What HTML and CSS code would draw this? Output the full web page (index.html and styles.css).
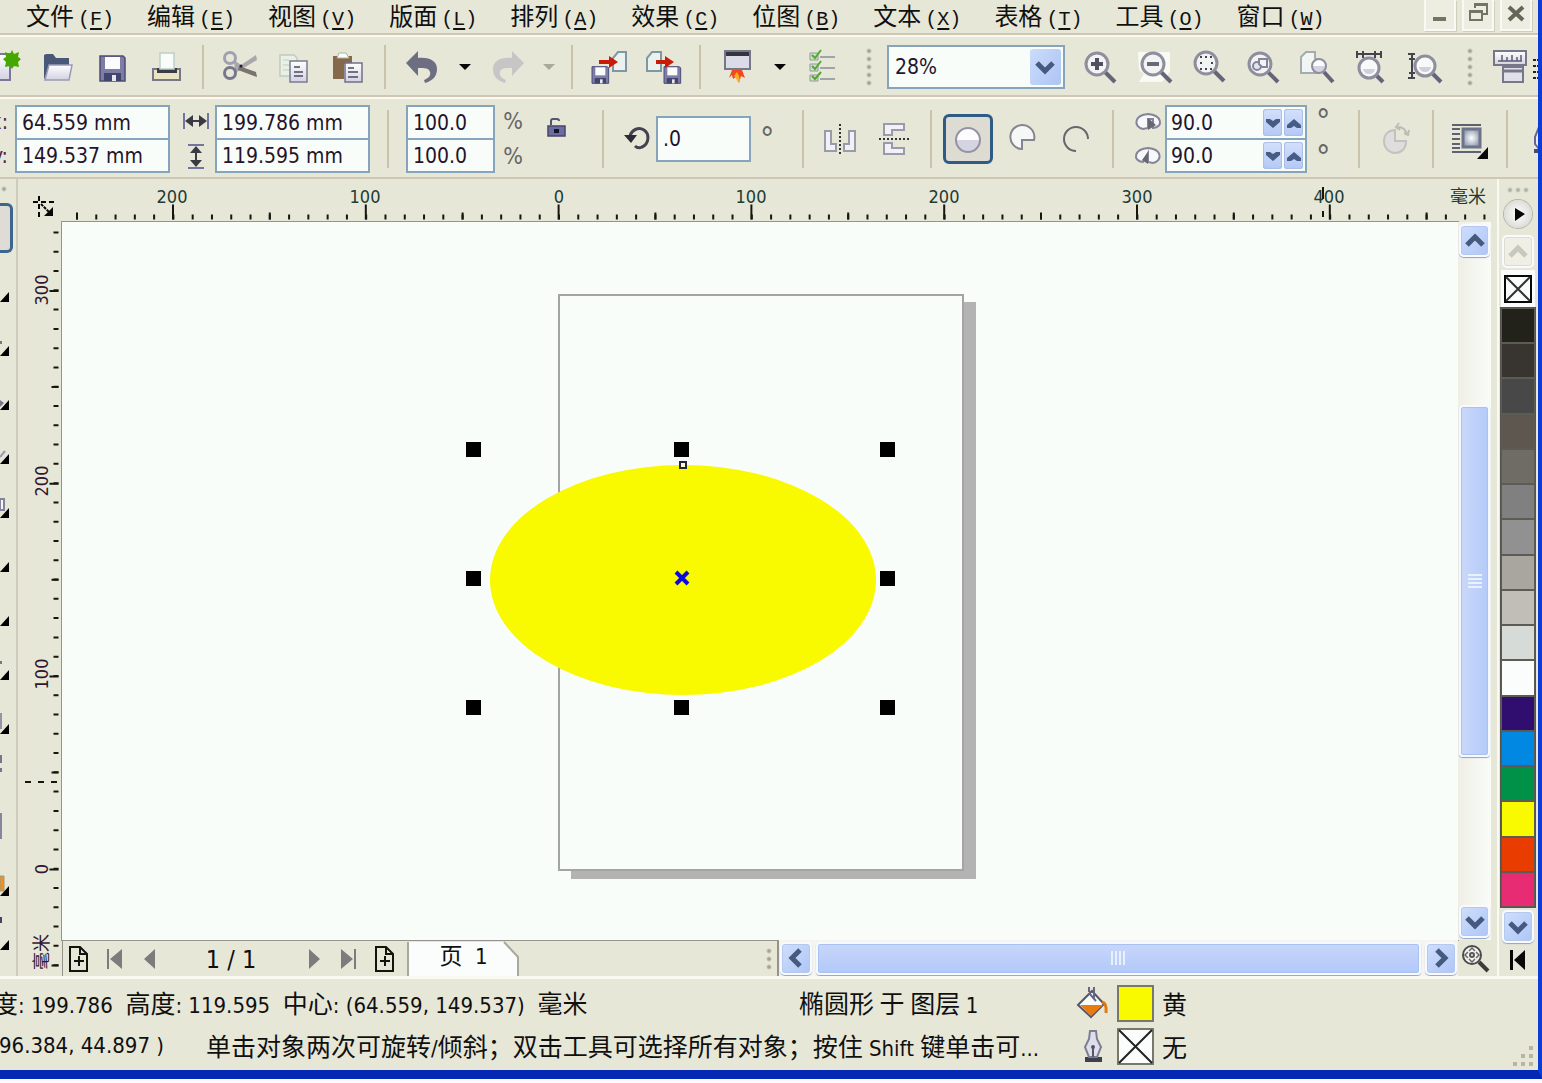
FILE: index.html
```html
<!DOCTYPE html>
<html lang="zh-CN">
<head>
<meta charset="utf-8">
<title>绘图窗口</title>
<link rel="stylesheet" href="styles.css">
</head>
<body>
<svg class="defs" aria-hidden="true">
  <defs>
    <linearGradient id="glass" x1="0" y1="0" x2="0" y2="1"><stop offset="0.5" stop-color="#fbfcfb"/><stop offset="0.5" stop-color="#d4d4e2"/></linearGradient>
    <linearGradient id="sheet" x1="0" y1="0" x2="0" y2="1"><stop offset="0" stop-color="#fff"/><stop offset="1" stop-color="#d2d2e2"/></linearGradient>
    <radialGradient id="glow"><stop offset="0" stop-color="#fff"/><stop offset="1" stop-color="#98a2b6"/></radialGradient>
    <symbol id="lens" viewBox="0 0 36 36" overflow="visible"><path d="M22 22l11 11" stroke="#666478" stroke-width="4"/><circle cx="15" cy="15" r="11" fill="#f2f4f4" stroke="#8f8e9e" stroke-width="3"/></symbol>
    <symbol id="disk" viewBox="0 0 36 36"><path d="M6 7h23l2 2v23H6z" fill="#7d7da6" stroke="#4c4c78" stroke-width="1.5"/><path d="M11 8h15v12H11z" fill="#fafcfc"/><path d="M10 24h17v8H10z" fill="#43466c"/><path d="M18 26h4v6h-4z" fill="#e6e6ee"/></symbol>
    <symbol id="bend" viewBox="0 0 36 36"><path d="M2 14L14 2v7c13-1 19 4 19 11 0 8-5 12-12 14l-1-3c5-2 7-5 6-8-1-4-5-4-12-4v8z" fill="currentColor"/></symbol>
    <symbol id="down" viewBox="0 0 24 24"><path d="M4 8l8 8 8-8" fill="none" stroke="currentColor" stroke-width="5"/></symbol>
    <symbol id="pageadd" viewBox="0 0 24 30"><path d="M3 3h10l7 7v17H3zM13 3v7h7M7 17h10M12 12v10" fill="none" stroke="#14140f" stroke-width="2"/></symbol>
  </defs>
</svg>
<div class="window">
  <header class="menubar">
    <nav class="menus">
      <button>文件<kbd>(<u>F</u>)</kbd></button><button>编辑<kbd>(<u>E</u>)</kbd></button><button>视图<kbd>(<u>V</u>)</kbd></button><button>版面<kbd>(<u>L</u>)</kbd></button><button>排列<kbd>(<u>A</u>)</kbd></button><button>效果<kbd>(<u>C</u>)</kbd></button><button>位图<kbd>(<u>B</u>)</kbd></button><button>文本<kbd>(<u>X</u>)</kbd></button><button>表格<kbd>(<u>T</u>)</kbd></button><button>工具<kbd>(<u>O</u>)</kbd></button><button>窗口<kbd>(<u>W</u>)</kbd></button>
    </nav>
    <div class="winctl">
      <button aria-label="最小化"><svg width="24" height="24"><path d="M5 16h13v4H5z" fill="#747466"/></svg></button>
      <button aria-label="还原"><svg width="24" height="24"><path d="M9 7V3h12v10h-4M4 10h12v9H4z" fill="none" stroke="#747466" stroke-width="2"/><path d="M8 2h14v3H8zM3 9h14v3H3z" fill="#747466"/></svg></button>
      <button aria-label="关闭"><svg width="24" height="24"><path d="M5 6l14 13M19 6L5 19" stroke="#66665a" stroke-width="4"/></svg></button>
    </div>
  </header>

  <div class="toolbar" role="toolbar">
    <button class="tool first" aria-label="新建"><svg class="i"><path d="M2 5h22v26H2z" fill="url(#sheet)" stroke="#7a7898" stroke-width="2"/><path d="M26 1l2 4 5-2-1 5 3 2-3 3 1 5-5-1-2 3-2-3-5 1 1-5-3-3 3-2-1-5 5 2z" fill="#45a800"/></svg></button>
    <button class="tool" aria-label="打开"><svg class="i"><path d="M4 31V6l2-1h7l3 4h13v8H9z" fill="#4a5878"/><path d="M9 16h23l-3 15H5z" fill="url(#sheet)" stroke="#9a9cb4" stroke-width="1.5"/></svg></button>
    <button class="tool" aria-label="保存"><svg class="i"><use href="#disk"/></svg></button>
    <button class="tool" aria-label="打印"><svg class="i"><path d="M5 20h27v11H5z" fill="#e8e4c4" stroke="#77778a" stroke-width="2"/><path d="M9 19h20v5H9z" fill="#3c3c46"/><path d="M12 4h14v16H12z" fill="#f8fcfa" stroke="#bdd0c6" stroke-width="1.5"/></svg></button>
    <i class="sep"></i>
    <button class="tool" aria-label="剪切"><svg class="i"><path d="M12 11l7 5L34 6l1 5-15 9-7 4" fill="#a8a8ac"/><path d="M17 17l17 6 1 5-19-7z" fill="#78746e"/><circle cx="8" cy="9" r="5.500" fill="none" stroke="#a0a0b0" stroke-width="3"/><circle cx="8" cy="24" r="5.500" fill="none" stroke="#77778a" stroke-width="3"/><circle cx="19" cy="17" r="1.500" fill="#222"/></svg></button>
    <button class="tool" aria-label="复制"><svg class="i"><path d="M4 6h14l3 3v18H4z" fill="#eaf0e6" stroke="#bccdbf" stroke-width="1.500"/><path d="M7 11h6M7 16h6M7 21h6" stroke="#bccdbf"/><path d="M14 12h17v21H14z" fill="url(#sheet)" stroke="#7a7c90" stroke-width="1.500"/><path d="M18 18h6M18 23h9M18 27h9" stroke="#4a4a60" stroke-width="1.500"/></svg></button>
    <button class="tool" aria-label="粘贴"><svg class="i"><path d="M3 7h19v8h-8v15H3z" fill="#86684a"/><path d="M7 9l2-5h7l3 5z" fill="#fbfdfb" stroke="#aab4ac"/><path d="M15 14h17v19H15z" fill="url(#sheet)" stroke="#70708c" stroke-width="1.500"/><path d="M18 19h6M18 23h10M18 28h10" stroke="#4a4a60" stroke-width="1.500"/></svg></button>
    <i class="sep"></i>
    <button class="tool ink" aria-label="撤消"><svg class="i"><use href="#bend"/></svg></button>
    <button class="drop" aria-label="撤消列表"><svg width="12" height="8"><path d="M0 1h12L6 7z" fill="#080808"/></svg></button>
    <button class="tool pale" aria-label="重做" disabled><svg class="i flip"><use href="#bend"/></svg></button>
    <button class="drop near" aria-label="重做列表" disabled><svg width="12" height="8"><path d="M0 1h12L6 7z" fill="#aaaa98"/></svg></button>
    <i class="sep"></i>
    <button class="tool" aria-label="导入"><svg class="i"><path d="M22 22V9l5-6h8v19z" fill="#eaf2ee" stroke="#7f96a4" stroke-width="2"/><use href="#disk" x="-3" y="13" width="24" height="24"/><path d="M8 11h10V7l9 6-9 6v-4H8z" fill="#c81c08"/></svg></button>
    <button class="tool" aria-label="导出"><svg class="i"><path d="M2 22V9l5-6h9v19z" fill="#eaf2ee" stroke="#7f96a4" stroke-width="2"/><use href="#disk" x="15" y="13" width="24" height="24"/><path d="M11 11h9V7l9 6-9 6v-4h-9z" fill="#c81c08"/></svg></button>
    <i class="sep"></i>
    <button class="tool" aria-label="应用程序启动器"><svg class="i"><path d="M6 2h25v18H6z" fill="#dcdce8" stroke="#77778a" stroke-width="2"/><path d="M7 3h23v4H7z" fill="#35353e"/><path d="M10 29l3-8h10l3 8-4-2-2 7-3-6-3 2-1-4z" fill="#f04a20"/><path d="M15 27l3-4 2 4 1 5-2 1-2-4z" fill="#fbb020"/></svg></button>
    <button class="drop" aria-label="启动器列表"><svg width="12" height="8"><path d="M0 1h12L6 7z" fill="#080808"/></svg></button>
    <button class="tool" aria-label="选项"><svg class="i"><path d="M5 4h8v7H5zM5 15h8v7H5zM5 26h8v6H5z" fill="#d4dcd0" stroke="#8c9c94"/><path d="M15 8h15M15 19h15M15 30h15" stroke="#85909a" stroke-width="1.500"/><path d="M7 6l3 3 6-8M7 17l3 3 6-8M7 27l3 3 6-7" fill="none" stroke="#50a830" stroke-width="2"/></svg></button>
    <i class="grip"></i>
    <span class="combo"><select aria-label="缩放级别"><option>28%</option></select><svg width="31" height="36"><use href="#down" x="3" y="6" width="24" height="24"/></svg></span>
    <button class="tool" aria-label="放大"><svg class="i"><use href="#lens"/><path d="M9 15h12M15 9v12" stroke="#504e60" stroke-width="4"/></svg></button>
    <button class="tool" aria-label="缩小"><svg class="i"><path d="M2 3h32v20l-8 10H3l5-8-5-4z" fill="#f8faf4"/><use href="#lens" x="2"/><path d="M11 15h12" stroke="#686878" stroke-width="4"/></svg></button>
    <button class="tool" aria-label="缩放选定范围"><svg class="i"><use href="#lens" x="1" y="-1"/><path d="M10 8h13M10 14h2M21 14h2M10 20h13" stroke="#44444e" stroke-width="2" stroke-dasharray="2 3"/></svg></button>
    <button class="tool" aria-label="缩放全部对象"><svg class="i"><use href="#lens" x="1"/><circle cx="13" cy="17" r="4" fill="#e4e4ee" stroke="#85859a" stroke-width="2"/><path d="M15 10h8v8h-5l-3-3z" fill="#f4f4f8" stroke="#85859a" stroke-width="2"/></svg></button>
    <button class="tool" aria-label="显示页面"><svg class="i"><path d="M3 24V8l5-5h9v6l4 4v11z" fill="#f2f6f2" stroke="#a4acb2" stroke-width="2"/><path d="M26 23l9 10" stroke="#666478" stroke-width="4"/><circle cx="21" cy="17" r="7" fill="url(#glass)" stroke="#8f8e9e" stroke-width="2"/></svg></button>
    <button class="tool" aria-label="按页宽显示"><svg class="i"><path d="M5 2v7M29 2v7M5 5h24M11 2v7M23 2v7" stroke="#44444e" stroke-width="2"/><path d="M24 26l7 7" stroke="#666478" stroke-width="4"/><circle cx="17" cy="19" r="10" fill="#f8faf9" stroke="#8f8e9e" stroke-width="3"/><path d="M11 20h12q-1 5-6 5t-6-5z" fill="#cfcfde"/></svg></button>
    <button class="tool" aria-label="按页高显示"><svg class="i"><path d="M2 5h7M2 29h7M6 5v24M3 10h6M3 24h6" stroke="#44444e" stroke-width="2"/><path d="M26 24l9 9" stroke="#666478" stroke-width="4"/><circle cx="19" cy="17" r="10" fill="#f8faf9" stroke="#8f8e9e" stroke-width="3"/><path d="M13 18h12q-1 5-6 5t-6-5z" fill="#cfcfde"/></svg></button>
    <i class="grip"></i>
    <button class="tool snug" aria-label="标尺"><svg class="i"><path d="M2 2h32v14H2z" fill="url(#sheet)" stroke="#77778a" stroke-width="2"/><path d="M6 12h24M10 6v6M15 8v4M20 6v6M25 8v4M29 6v6" stroke="#5c5c70" stroke-width="1.500"/><path d="M11 18h20v15H11z" fill="#e0e0ea" stroke="#77778a" stroke-width="2"/><path d="M12 22h18" stroke="#77778a" stroke-width="3"/></svg></button>
    <svg width="8" height="36"><path d="M1 11h5M1 17h5M1 23h5M1 29h5" stroke="#222" stroke-width="2" stroke-dasharray="3 1"/></svg>
  </div>

  <div class="propbar">
    <div class="axis"><label for="px">x:</label><label for="py">y:</label></div>
    <div class="pair pos"><input id="px" value="64.559 mm"><input id="py" value="149.537 mm"></div>
    <div class="marks">
      <svg width="28" height="24" aria-hidden="true"><path d="M2 4v16M26 4v16" stroke="#7474a0" stroke-width="2"/><path d="M3 12l8-6v5h6V6l8 6-8 6v-5h-6v5z" fill="#3a3a44"/></svg>
      <svg width="28" height="28" aria-hidden="true"><path d="M6 3h16M6 26h16" stroke="#7474a0" stroke-width="2"/><path d="M14 4l6 7h-5v7h5l-6 7-6-7h5v-7H8z" fill="#3a3a44"/></svg>
    </div>
    <div class="pair"><input aria-label="宽度" value="199.786 mm"><input aria-label="高度" value="119.595 mm"></div>
    <i class="sep wide"></i>
    <div class="pair pct"><input aria-label="水平比例" value="100.0"><input aria-label="垂直比例" value="100.0"></div>
    <div class="units"><span>%</span><span>%</span></div>
    <button class="lock" aria-label="锁定比例"><svg width="24" height="24"><path d="M7 10V6q0-2 2-2h4q2 0 2 2" fill="none" stroke="#55556a" stroke-width="2"/><path d="M4 11h17v10H4z" fill="#6c6ca0" stroke="#45456a" stroke-width="1.500"/><path d="M10 14h5v4h-5z" fill="#15152a"/></svg></button>
    <i class="sep broad"></i>
    <svg class="turn" width="31" height="36" aria-hidden="true"><path d="M5 15c2-7 9-9 14-6 6 4 5 14-2 17-2 1-5 1-7-1" fill="none" stroke="#44424e" stroke-width="3"/><path d="M-1 14h13l-6 8z" fill="#2c2a34"/></svg>
    <input class="angle" aria-label="旋转角度" value=".0">
    <span class="deg">°</span>
    <i class="sep"></i>
    <button class="tool" aria-label="水平镜像"><svg class="i"><path d="M3 10h6v13h5v7H3zM33 10h-6v13h-5v7h11z" fill="#f0f2f6" stroke="#9a9aac" stroke-width="2"/><path d="M18 3v31" stroke="#333" stroke-width="2" stroke-dasharray="2 2"/></svg></button>
    <button class="tool" aria-label="垂直镜像"><svg class="i"><path d="M8 3h20v6H16v5H8zM8 33h20v-6H16v-5H8z" fill="#f0f2f6" stroke="#9a9aac" stroke-width="2"/><path d="M3 18h31" stroke="#333" stroke-width="2" stroke-dasharray="2 2"/></svg></button>
    <i class="sep"></i>
    <button class="tool" aria-label="椭圆形" aria-pressed="true"><span class="pressed"><svg class="i"><circle cx="18" cy="19" r="12" fill="url(#glass)" stroke="#9292a4" stroke-width="2"/></svg></span></button>
    <button class="tool" aria-label="饼图"><svg class="i"><path d="M18 28v-9h12A12 12 0 1 0 18 28z" fill="#f6f8f8" stroke="#85858f" stroke-width="2"/></svg></button>
    <button class="tool" aria-label="弧形"><svg class="i"><path d="M18 30A12 12 0 1 1 30 18" fill="none" stroke="#66666e" stroke-width="2"/></svg></button>
    <i class="sep"></i>
    <div class="marks arcs">
      <svg width="28" height="24" aria-hidden="true"><path d="M9 19c-10-2-9-14 5-15 14 1 16 13 5 14V9h-5v9z" fill="#f6f8fa" stroke="#85859a" stroke-width="2"/><path d="M14 8l8 7-8 5z" fill="#666674"/></svg>
      <svg width="28" height="24" aria-hidden="true"><path d="M19 19c10-2 9-14-5-15C0 5-2 17 9 18l5-9v9z" fill="#f6f8fa" stroke="#85859a" stroke-width="2"/><path d="M14 8l-6 8 6 4z" fill="#666674"/></svg>
    </div>
    <div class="pair spin">
      <div><input aria-label="起始角度" value="90.0"><button aria-label="减小"><svg width="18" height="18"><path d="M2 5h4l3 2 3-2h4v3l-7 6-7-6z" fill="#465c86"/></svg></button><button aria-label="增大"><svg width="18" height="18"><path d="M2 14h4l3-2 3 2h4v-3L9 5l-7 6z" fill="#465c86"/></svg></button></div>
      <div><input aria-label="结束角度" value="90.0"><button aria-label="减小"><svg width="18" height="18"><path d="M2 5h4l3 2 3-2h4v3l-7 6-7-6z" fill="#465c86"/></svg></button><button aria-label="增大"><svg width="18" height="18"><path d="M2 14h4l3-2 3 2h4v-3L9 5l-7 6z" fill="#465c86"/></svg></button></div>
    </div>
    <div class="degs"><span class="deg">°</span><span class="deg">°</span></div>
    <i class="sep"></i>
    <button class="tool" aria-label="方向" disabled><svg class="i"><path d="M17 9v11h11c0 8-5 12-11 12S6 27 6 20 11 9 17 9z" fill="#dedede" stroke="#c2c2be" stroke-width="2"/><path d="M20 6c5 0 8 3 9 8M21 2l-3 4 4 3M26 12l4 2 1-5" fill="none" stroke="#bcbcb6" stroke-width="2"/></svg></button>
    <i class="sep"></i>
    <button class="tool" aria-label="段落文本换行"><svg class="i"><path d="M0 4h29M0 31h29M0 8h8M0 13h8M0 18h8M0 23h8M0 27h8" stroke="#5c6274" stroke-width="2"/><path d="M11 8h17v18H11z" fill="url(#glow)" stroke="#6c7488" stroke-width="3"/><path d="M36 26v12H25z" fill="#080808"/></svg></button>
    <i class="sep"></i>
    <button class="tool" aria-label="轮廓宽度"><svg class="i"><path d="M8 32h24v-4H8z" fill="#4c4c68"/><path d="M13 6l-4 10v7l4 5h6V6z" fill="#e8e8f2" stroke="#66668a" stroke-width="2"/></svg></button>
  </div>

  <main class="work">
    <aside class="toolbox">
      <i class="dot"></i>
      <button class="on" aria-label="挑选"></button>
      <button aria-label="形状"><svg><path d="M9 37v10H0z"/></svg></button>
      <button aria-label="裁剪"><svg><path d="M9 37v10H0z"/><path d="M0 32h2v3H0z" fill="#77778a"/></svg></button>
      <button aria-label="缩放"><svg><path d="M0 37l4 3-4 4z" fill="#77778a"/><path d="M9 37v10H0z"/></svg></button>
      <button aria-label="手绘"><svg><path d="M0 40l5-6" stroke="#9a9ab0" stroke-width="2"/><path d="M9 37v10H0z"/></svg></button>
      <button aria-label="智能填充"><svg><path d="M0 28h4v11H0z" fill="#f6f6fa" stroke="#85859a" stroke-width="2"/><path d="M9 37v10H0z"/></svg></button>
      <button aria-label="矩形"><svg><path d="M9 37v10H0z"/></svg></button>
      <button aria-label="椭圆"><svg><path d="M9 37v10H0z"/></svg></button>
      <button aria-label="多边形"><svg><path d="M9 37v10H0z"/><path d="M0 28h2v3H0z" fill="#77778a"/></svg></button>
      <button aria-label="基本形状"><svg><path d="M0 26h2v16H0z" fill="#9494a8"/><path d="M9 37v10H0z"/></svg></button>
      <button aria-label="文本"><svg><path d="M0 14h2v8H0zM0 27h2v4H0z" fill="#77778a"/></svg></button>
      <button aria-label="表格"><svg><path d="M0 18h2v26H0z" fill="#8585a0"/></svg></button>
      <button aria-label="填充"><svg><path d="M0 27h4v15H0z" fill="#f0921c" stroke="#9a9a8a"/><path d="M9 37v10H0z"/></svg></button>
      <button aria-label="交互填充"><svg><path d="M0 14h2v6H0z" fill="#44446a"/><path d="M9 37v10H0z"/></svg></button>
    </aside>

    <div class="corner"><svg width="24" height="24" aria-hidden="true"><path d="M0 6h22M6 0v22" stroke="#080808" stroke-width="2" stroke-dasharray="5 3"/><path d="M8 8l9 9" stroke="#080808" stroke-width="2" stroke-dasharray="3 1"/><path d="M20 11v9h-9z" fill="#080808"/></svg></div>

    <svg class="hruler" role="img" aria-label="水平标尺">
      <path d="M14 38H1424" class="tick" stroke-width="5" stroke-dasharray="2 17.28"/>
      <path d="M14 37H1424" class="tick" stroke-width="7" stroke-dasharray="2 190.8"/>
      <path d="M110 33H1424" class="tick" stroke-width="15" stroke-dasharray="2 190.8"/>
      <path d="M1261 8v12M1261 32v6" class="tick" stroke-width="2"/>
      <text x="110" y="24">200</text><text x="303" y="24">100</text><text x="497" y="24">0</text><text x="689" y="24">100</text><text x="882" y="24">200</text><text x="1075" y="24">300</text><text x="1267" y="24">400</text><text x="1406" y="24">毫米</text>
    </svg>

    <svg class="vruler" role="img" aria-label="垂直标尺">
      <path d="M38 9.500V746" class="tick" stroke-width="5" stroke-dasharray="2 17.28"/>
      <path d="M37 164V746" class="tick" stroke-width="7" stroke-dasharray="2 190.8"/>
      <path d="M36 68V650" class="tick" stroke-width="9" stroke-dasharray="2 190.8"/>
      <path d="M7 560h34" class="tick" stroke-width="2" stroke-dasharray="6 7"/>
      <text transform="translate(30 68) rotate(-90)">300</text><text transform="translate(30 259) rotate(-90)">200</text><text transform="translate(30 452) rotate(-90)">100</text><text transform="translate(30 647) rotate(-90)">0</text><text transform="translate(30 730) rotate(-90)">毫米</text>
    </svg>

    <svg class="canvas" role="img" aria-label="绘图页面">
      <path d="M901 80h13v577H509v-9h392z" fill="#b3b3b3"/>
      <path d="M497 73h404v575H497z" fill="#f9fdfa" stroke="#a4a4a4" stroke-width="2"/>
      <ellipse cx="621" cy="358" rx="193" ry="115" fill="#f9f900"/>
      <path d="M404 220h15v15h-15zM612 220h15v15h-15zM818 220h15v15h-15zM404 349h15v15h-15zM818 349h15v15h-15zM404 478h15v15h-15zM612 478h15v15h-15zM818 478h15v15h-15z"/>
      <path d="M618 240h6v6h-6z" fill="#fafad0" stroke="#26263a" stroke-width="2"/>
      <path d="M614 350l12 12M626 350l-12 12" stroke="#0a0ae0" stroke-width="4"/>
    </svg>

    <div class="vscroll">
      <button class="sb" aria-label="向上"><svg class="up" width="24" height="24"><use href="#down"/></svg></button>
      <div class="vtrack"><div class="thumb"><svg width="14" height="15"><path d="M0 1h14M0 5h14M0 9h14M0 13h14" stroke="#e8f2ff" stroke-width="2"/></svg></div></div>
      <button class="sb" aria-label="向下"><svg width="24" height="24"><use href="#down"/></svg></button>
    </div>

    <div class="pages">
      <button aria-label="在前添加页"><svg width="24" height="30"><use href="#pageadd"/></svg></button>
      <button aria-label="首页"><svg width="20" height="20"><path d="M2 0h2v20H2zM17 0v20L5 10z" fill="#7c7c7c"/></svg></button>
      <button aria-label="上一页"><svg width="20" height="20"><path d="M14 0v20L3 10z" fill="#7c7c7c"/></svg></button>
      <span class="count">1 / 1</span>
      <button aria-label="下一页"><svg width="20" height="20"><path d="M6 0v20l11-10z" fill="#7c7c7c"/></svg></button>
      <button aria-label="末页"><svg width="20" height="20"><path d="M15 0h2v20h-2zM2 0v20l12-10z" fill="#7c7c7c"/></svg></button>
      <button aria-label="在后添加页"><svg width="24" height="30"><use href="#pageadd"/></svg></button>
      <button class="tab"><svg width="113" height="35" aria-hidden="true"><path d="M0 0h97l15 15v20H0z" fill="#fafdfb"/><path d="M1 0v35M97 0l14 15v20" fill="none" stroke="#a8a89c" stroke-width="2"/></svg><span>页<b>  1</b></span></button>
      <i class="grip"></i>
    </div>
    <div class="hscroll">
      <button class="sb" aria-label="向左"><svg class="left" width="24" height="24"><use href="#down"/></svg></button>
      <div class="thumb"><svg width="16" height="14"><path d="M1 0v14M5 0v14M9 0v14M13 0v14" stroke="#e8f2ff" stroke-width="2"/></svg></div>
      <button class="sb" aria-label="向右"><svg class="right" width="24" height="24"><use href="#down"/></svg></button>
    </div>
    <button class="nav" aria-label="导航器"><svg width="30" height="30"><path d="M19 19l9 9" stroke="#3c3c3c" stroke-width="4"/><circle cx="12" cy="12" r="9" fill="#f4f4ee" stroke="#4c4c4c" stroke-width="2"/><path d="M9 8l3-3 3 3M9 16l3 3 3-3M8 9l-3 3 3 3M16 9l3 3-3 3" fill="none" stroke="#66666a" stroke-width="1.500"/><circle cx="12" cy="12" r="2" fill="none" stroke="#55555a" stroke-width="2"/></svg></button>

    <aside class="palette">
      <i class="dots"></i>
      <button class="play" aria-label="调色板菜单"><svg width="28" height="28"><path d="M11 8l10 6-10 7z" fill="#080808"/></svg></button>
      <button class="sb off" aria-label="向上滚动" disabled><svg class="up" width="24" height="24"><use href="#down"/></svg></button>
      <button class="none" aria-label="无填充"><svg width="28" height="28"><path d="M1 1h26v26H1z" fill="#fafdfb" stroke="#080808" stroke-width="2"/><path d="M2 2l24 24M26 2L2 26" stroke="#333" stroke-width="2"/></svg></button>
      <div class="swatches">
        <button class="c1" aria-label="黑"></button><button class="c2" aria-label="90% 黑"></button><button class="c3" aria-label="80% 黑"></button><button class="c4" aria-label="70% 黑"></button><button class="c5" aria-label="60% 黑"></button><button class="c6" aria-label="50% 黑"></button><button class="c7" aria-label="40% 黑"></button><button class="c8" aria-label="30% 黑"></button><button class="c9" aria-label="20% 黑"></button><button class="c10" aria-label="10% 黑"></button><button class="c11" aria-label="白"></button><button class="c12" aria-label="蓝"></button><button class="c13" aria-label="青"></button><button class="c14" aria-label="绿"></button><button class="c15" aria-label="黄"></button><button class="c16" aria-label="红"></button><button class="c17" aria-label="洋红"></button>
      </div>
      <button class="sb" aria-label="向下滚动"><svg width="24" height="24"><use href="#down"/></svg></button>
      <button class="expand" aria-label="展开"><svg width="18" height="20"><path d="M1 0h3v20H1zM16 0v20L5 10z" fill="#080808"/></svg></button>
    </aside>
  </main>

  <footer class="status">
    <div class="size">宽度<b>: 199.786  </b>高度<b>: 119.595  </b>中心<b>: (64.559, 149.537)  </b>毫米</div>
    <div class="kind">椭圆形 于 图层 <b>1</b></div>
    <div class="attr"><svg width="34" height="36" aria-hidden="true"><path d="M3 20L17 6l12 13-13 13z" fill="#fafcfa" stroke="#55556a" stroke-width="2"/><path d="M5 20h23L16 31z" fill="#e87c10"/><path d="M14 7V2m5 12V2M14 8l7 8" stroke="#66668a" stroke-width="2"/><path d="M27 17q5 1 4 11" fill="none" stroke="#e07810" stroke-width="3"/></svg><i class="chip"></i>黄</div>
    <div class="coord"><b>( 396.384, 44.897 )</b></div>
    <div class="hint">单击对象两次可旋转<b>/</b>倾斜；双击工具可选择所有对象；按住<b> Shift </b>键单击可<b>...</b></div>
    <div class="attr"><svg width="34" height="36" aria-hidden="true"><path d="M10 29h17v5H10z" fill="#3e3e4c"/><path d="M15 3h6l1 8 4 8-4 10h-8l-4-10 4-8z" fill="#dedeea" stroke="#7c7c94" stroke-width="2"/><path d="M18 20v9" stroke="#55556a" stroke-width="2"/><circle cx="18" cy="19" r="2" fill="#55556a"/></svg><svg width="37" height="37" aria-hidden="true"><path d="M1 1h35v35H1z" fill="#fafdfb" stroke="#77776c" stroke-width="2"/><path d="M2 2l33 33M35 2L2 35" stroke="#222" stroke-width="2"/></svg>无</div>
    <svg class="sizer" width="24" height="24" aria-hidden="true"><path d="M17 2h4v4h-4zM9 10h4v4H9zM17 10h4v4h-4zM1 18h4v4H1zM9 18h4v4H9zM17 18h4v4h-4z" fill="#b8b4a0"/></svg>
  </footer>
</div>
</body>
</html>
```
FILE: styles.css
```css
* { box-sizing: border-box; }
:root {
  --face: #e7e7d8;
  --line: #cfc6b4;
  --latin: "DejaVu Sans Condensed", "DejaVu Sans", "Noto Sans CJK SC", sans-serif;
}
body {
  margin: 0;
  min-height: 100vh;
  display: flex;
  background: #fbfbff;
  padding-bottom: 4px;
  color: #101010;
  font: 21px/1 var(--latin);
  overflow: hidden;
}
.defs { position: absolute; width: 0; height: 0; }
.window {
  flex: 1;
  min-width: 0;
  display: flex;
  flex-direction: column;
  background: var(--face);
  border-right: 4px solid #0c3cd8;
  border-bottom: 9px solid #0428b4;
}
button {
  font: inherit;
  color: inherit;
  background: none;
  border: 0;
  padding: 0;
  display: grid;
  place-items: center;
}
input {
  font: 21px/1 var(--latin);
  color: #24142c;
  background: #f9fdfa;
  border: 2px solid #86a5bc;
  padding: 0 5px;
  min-width: 0;
  border-radius: 0;
}
svg { display: block; flex: none; overflow: visible; }
b { font-weight: 400; font-family: var(--latin); font-size: 22px; white-space: pre; }

/* menu bar */
.menubar {
  height: 37px;
  display: flex;
  justify-content: space-between;
  border-bottom: 2px solid #fafaf2;
  box-shadow: inset 0 -2px var(--line);
  padding: 0 6px 0 26px;
}
.menus { display: flex; gap: 33px; height: 32px; align-items: center; }
.menus button {
  display: block;
  font: 24px/32px "Noto Sans CJK SC", sans-serif;
  white-space: nowrap;
}
.menus kbd { font: 20px/26px "Liberation Mono", monospace; margin-left: 4px; }
.menus u { text-underline-offset: 3px; }
.winctl { display: flex; gap: 6px; }
.winctl button {
  width: 32px;
  height: 31px;
  padding-bottom: 4px;
  background: #edede2;
  border: solid #fafaf4;
  border-width: 0 2px 2px;
  box-shadow: 1px 1px #cfcfc0;
}

/* tool bars */
.toolbar, .propbar {
  display: flex;
  align-items: center;
  overflow: hidden;
  border-bottom: 2px solid #fafaf2;
  box-shadow: inset 0 -2px var(--line);
}
.toolbar { height: 62px; }
.propbar { height: 80px; border-bottom: 0; }
.toolbar > *, .propbar > * { flex: none; }
.i { width: 36px; height: 36px; }
.flip { transform: scaleX(-1); }
.tool { width: 54px; height: 54px; }
.tool.first { margin-left: -23px; }
.tool.snug { width: 44px; }
.ink { color: #6e6e82; }
.pale { color: #c6c6c6; }
.drop { width: 32px; height: 54px; }
.drop.near { width: 27px; }
.sep {
  width: 20px;
  height: 44px;
  background: linear-gradient(#c9c3ac, #c9c3ac) center / 2px 100% no-repeat;
}
.propbar .sep { height: 58px; }
.propbar .sep.wide { width: 36px; }
.propbar .sep.broad { width: 44px; }
.grip {
  width: 37px;
  height: 40px;
  background: radial-gradient(circle, #a4a494 1px, transparent 3px) center / 8px 8px repeat-y;
}
.combo { position: relative; margin-right: 8px; }
.combo select {
  display: block;
  appearance: none;
  width: 178px;
  height: 44px;
  font: 21px/1 var(--latin);
  color: #24142c;
  background: #f9fdfa;
  border: 2px solid #86a5bc;
  border-radius: 0;
  padding: 0 6px;
}
.combo svg {
  position: absolute;
  top: 4px;
  right: 4px;
  pointer-events: none;
  color: #46597e;
  background: linear-gradient(120deg, #cbdcfc, #adc4f4);
  border-radius: 3px;
}
.axis, .pair, .marks, .units, .degs { display: flex; flex-direction: column; }
.axis { width: 15px; align-items: flex-end; padding-right: 7px; gap: 13px; color: #50204c; }
.pair { width: 155px; }
.pair > * { height: 35px; }
.pair > * + * { margin-top: -2px; }
.pair.pct { width: 89px; }
.marks { width: 45px; align-items: center; gap: 9px; padding-left: 6px; }
.marks.arcs { width: 42px; padding-left: 8px; gap: 10px; }
.units { width: 36px; gap: 12px; align-items: center; color: #666; font-size: 23px; }
.lock { width: 50px; padding-bottom: 24px; }
.turn { width: 31px; }
.angle { width: 95px; height: 46px; }
.deg { width: 42px; padding-left: 9px; font-size: 32px; line-height: 36px; color: #666; }
.pressed {
  width: 50px;
  height: 50px;
  display: grid;
  place-items: center;
  border: 3px solid #2f5c86;
  border-radius: 6px;
  background: #dedcd2;
}
.pair.spin { width: 142px; }
.spin > div {
  display: flex;
  align-items: center;
  gap: 2px;
  background: #f9fdfa;
  border: 2px solid #86a5bc;
  padding-right: 2px;
}
.spin input { flex: 1; border: 0; padding: 0 4px; height: 28px; }
.spin button {
  width: 19px;
  height: 27px;
  border-radius: 3px;
  background: linear-gradient(#d4e0fa, #b4c8f6);
  box-shadow: inset 0 0 0 1px #a9bfe6;
}

/* work area */
.work {
  flex: 1;
  display: grid;
  grid-template-columns: 18px 44px minmax(0, 717fr) minmax(0, 679fr) 33px 47px;
  grid-template-rows: 43px minmax(0, 1fr) 36px;
}
.toolbox {
  grid-area: 1 / 1 / 4 / 2;
  border-right: 2px solid #cfccbc;
  display: flex;
  flex-direction: column;
  overflow: hidden;
}
.toolbox .dot { height: 22px; background: radial-gradient(circle, #a8a898 1px, transparent 3px) 0 6px / 8px 8px no-repeat; }
.toolbox button { flex: none; width: 18px; height: 54px; display: block; }
.toolbox svg { width: 18px; height: 54px; }
.toolbox .on {
  width: 13px;
  height: 50px;
  margin: 2px 0;
  background: #dedcd4;
  border: solid #3c6690;
  border-width: 3px 3px 3px 0;
  border-radius: 0 6px 6px 0;
}
.corner { grid-area: 1 / 2; padding: 17px 0 0 15px; }
.hruler { grid-area: 1 / 3 / 2 / 6; width: 100%; height: 43px; }
.vruler { grid-area: 2 / 2 / 4 / 3; width: 100%; height: 100%; }
.tick { stroke: #16160f; fill: none; }
.hruler text, .vruler text {
  font: 18px var(--latin);
  fill: #1e3c34;
  text-anchor: middle;
}
.vruler text { fill: #301830; }
.canvas {
  grid-area: 2 / 3 / 3 / 5;
  width: 100%;
  height: 100%;
  overflow: hidden;
  background: #f9fdfa;
  outline: 1px solid #94948a;
}
.vscroll {
  grid-area: 2 / 5;
  display: flex;
  flex-direction: column;
  gap: 2px;
  padding: 2px 1px;
  background: linear-gradient(90deg, #efefe6, #fafcf8);
}
.vtrack { flex: 1; padding: 146px 0; display: flex; }
.vtrack .thumb { flex: 1; background: linear-gradient(90deg, #cad8fa, #b4caf8); }
.sb {
  flex: none;
  width: 32px;
  height: 33px;
  color: #46597e;
  background: linear-gradient(135deg, #cfdefc, #aec6f6);
  border: 2px solid #f8faff;
  border-radius: 5px;
  box-shadow: inset 0 0 0 1px #b4c8f0, 0 1px 1px #8ca4cc;
}
.vscroll .sb, .vscroll .thumb { width: 31px; }
.thumb {
  display: grid;
  place-items: center;
  background: linear-gradient(#c8d6fa, #b2c9f9);
  border: 2px solid #f6f9ff;
  border-radius: 4px;
  box-shadow: inset 0 0 0 1px #a9c2f4, 0 1px 1px #8ca4cc;
}
.up { transform: rotate(180deg); }
.left { transform: rotate(90deg); }
.right { transform: rotate(-90deg); }
.pages {
  grid-area: 3 / 3;
  display: flex;
  align-items: center;
  border: solid #94948a;
  border-width: 1px 2px 0 1px;
  overflow: hidden;
}
.pages > * { flex: none; }
.pages button { width: 36px; height: 35px; padding-right: 4px; }
.pages .count { width: 126px; padding: 2px 6px 0 0; text-align: center; font-size: 25px; }
.pages .tab { position: relative; width: 113px; height: 35px; padding: 0; margin-left: 2px; font: 23px/35px "Noto Sans CJK SC", sans-serif; }
.pages .tab svg, .pages .tab span { grid-area: 1 / 1; }
.pages .tab span { padding-bottom: 8px; line-height: 27px; white-space: nowrap; }
.pages .grip { width: 16px; height: 24px; margin-left: auto; }
.hscroll {
  grid-area: 3 / 4;
  display: flex;
  align-items: center;
  gap: 4px;
  padding: 0 1px;
  background: #f4f5ee;
}
.hscroll .thumb { flex: 1; height: 33px; }
.nav { grid-area: 3 / 5; }
.palette {
  grid-area: 1 / 6 / 4 / 7;
  margin-left: 8px;
  padding-right: 2px;
  box-shadow: -2px 0 #fafaf4;
  display: flex;
  flex-direction: column;
  align-items: center;
}
.dots { width: 24px; height: 8px; margin: 7px 0 6px; background: radial-gradient(circle, #b0b0a0 1px, transparent 3px) center / 8px 8px; }
.play {
  width: 28px;
  height: 28px;
  border-radius: 50%;
  background: radial-gradient(circle, #fff, #cfcfc8);
  box-shadow: 0 0 0 1px #b4b4aa;
  margin-bottom: 7px;
}
.off { color: #c8c8bc; background: #efefe6; box-shadow: inset 0 0 0 1px #dcdcd0; }
.none { width: 34px; height: 37px; margin-top: 2px; background: #fafdfb; }
.swatches {
  flex: 1;
  width: 36px;
  display: flex;
  flex-direction: column;
  border: 1px solid #55554e;
}
.swatches button { flex: 1; border: 1px solid #5c5c54; }
.c1 { background: #22211a; } .c2 { background: #38342f; } .c3 { background: #484848; }
.c4 { background: #5d5750; } .c5 { background: #6f6b65; } .c6 { background: #808080; }
.c7 { background: #919191; } .c8 { background: #a8a69e; } .c9 { background: #c0beb6; }
.c10 { background: #d7dbd8; } .c11 { background: #fafdfb; } .c12 { background: #300e70; }
.c13 { background: #0088e2; } .c14 { background: #009149; } .c15 { background: #f9f900; }
.c16 { background: #e83c00; } .c17 { background: #e82c74; }
.swatches + .sb { margin-top: 2px; }
.expand { height: 33px; }

/* status bar */
.status {
  position: relative;
  height: 94px;
  border-top: 3px solid #fafaf2;
  display: grid;
  grid-template-columns: 206px 593px 276px minmax(0, 1fr);
  grid-template-rows: 48px 38px;
  font: 25px/1 "Noto Sans CJK SC", sans-serif;
  white-space: nowrap;
  align-items: center;
  overflow: hidden;
}
.size { grid-area: 1 / 1 / 2 / 3; margin-left: -32px; }
.kind { grid-area: 1 / 3; }
.attr { display: flex; align-items: center; gap: 8px; grid-column: 4; }
.coord { grid-area: 2 / 1; display: flex; justify-content: flex-end; padding-right: 42px; }
.hint { grid-area: 2 / 2 / 3 / 4; }
.chip { width: 37px; height: 37px; background: #f9f900; border: 2px solid #77776c; }
.sizer { position: absolute; right: 2px; bottom: 2px; }
```
